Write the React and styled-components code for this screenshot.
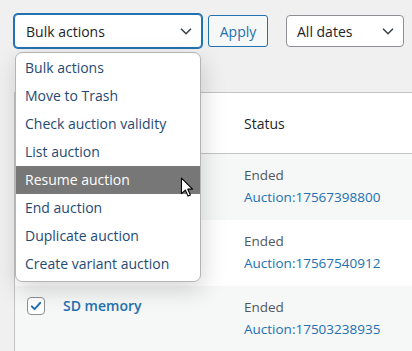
import React from 'react';
import styled, { createGlobalStyle } from 'styled-components';

const GlobalStyle = createGlobalStyle`
    html, body {
        margin: 0;
        padding: 0;
        background: #f0f0f1;
        overflow: hidden;
    }
    body {
        font-family: "Segoe UI", "Open Sans", "Liberation Sans", sans-serif;
        font-size: 14px;
        color: #1d2327;
    }
`;

const actions = [
    'Bulk actions',
    'Move to Trash',
    'Check auction validity',
    'List auction',
    'Resume auction',
    'End auction',
    'Duplicate auction',
    'Create variant auction',
];

const rows = [
    { name: '', auction: '17567398800', striped: true },
    { name: '', auction: '17567540912', striped: false },
    { name: 'SD memory', auction: '17503238935', striped: true, checked: true },
];

function Chevron() {
    return (
        <svg width="18" height="18" viewBox="0 0 20 20">
            <path d="M4.5 7.5l5.5 5.5 5.5-5.5" fill="none" stroke="#3c434a" strokeWidth="1.8" />
        </svg>
    );
}

function Cursor() {
    return (
        <svg width="14" height="21" viewBox="0 0 12 19">
            <path d="M1 1v14l3.5-3.2 2.4 5.5 2.2-1-2.4-5.3H11z" fill="#fff" stroke="#000" strokeWidth="1" strokeLinejoin="round" />
        </svg>
    );
}

function App() {
    return (
        <Page>
            <GlobalStyle />
            <Toolbar>
                <Select width={188} focused>
                    <span>Bulk actions</span>
                    <Chevron />
                </Select>
                <ApplyButton>Apply</ApplyButton>
                <Select width={118} gap={18}>
                    <span>All dates</span>
                    <Chevron />
                </Select>
            </Toolbar>

            <Table>
                <HeadRow>
                    <Cell />
                    <Cell />
                    <HeadCell>Status</HeadCell>
                </HeadRow>
                {rows.map((r) => (
                    <Row key={r.auction} striped={r.striped}>
                        <CheckCell>
                            {r.checked && (
                                <Check>
                                    <svg width="14" height="14" viewBox="0 0 20 20">
                                        <path d="M4 10.5l4 4 8-9" fill="none" stroke="#2271b1" strokeWidth="2.8" strokeLinecap="round" strokeLinejoin="round" />
                                    </svg>
                                </Check>
                            )}
                        </CheckCell>
                        <NameCell>{r.name}</NameCell>
                        <StatusCell>
                            <div>Ended</div>
                            <AuctionLink>Auction:{r.auction}</AuctionLink>
                        </StatusCell>
                    </Row>
                ))}
            </Table>

            <Menu>
                {actions.map((a) => (
                    <MenuItem key={a} active={a === 'Resume auction'}>{a}</MenuItem>
                ))}
            </Menu>
            <CursorWrap>
                <Cursor />
            </CursorWrap>
        </Page>
    );
}

export default App;

const Page = styled.div`
    position: relative;
    width: 412px;
    height: 351px;
    overflow: hidden;
`;

const Toolbar = styled.div`
    display: flex;
    align-items: center;
    padding: 14px 0 0 14px;
    height: 34px;
`;

const Select = styled.div`
    box-sizing: border-box;
    width: ${(p) => p.width}px;
    height: ${(p) => (p.focused ? 34 : 32)}px;
    margin-left: ${(p) => p.gap || 0}px;
    display: flex;
    align-items: center;
    justify-content: space-between;
    padding: 0 6px 0 ${(p) => (p.focused ? 11 : 10)}px;
    background: #fff;
    border: 1px solid ${(p) => (p.focused ? '#2271b1' : '#8c8f94')};
    box-shadow: ${(p) => (p.focused ? '0 0 0 1px #2271b1' : 'none')};
    border-radius: 4px;
    color: #1d2327;
    font-size: 14px;
`;

const ApplyButton = styled.div`
    box-sizing: border-box;
    height: 32px;
    width: 60px;
    margin-left: 6px;
    display: flex;
    align-items: center;
    justify-content: center;
    background: #f6f7f7;
    border: 1px solid #2271b1;
    border-radius: 3px;
    color: #2271b1;
    font-size: 14px;
`;

const Table = styled.div`
    margin: 44px 0 0 14px;
    width: 420px;
    background: #fff;
    border-top: 1px solid #c3c4c7;
    border-left: 1px solid #c3c4c7;
`;

const gridCols = `
    display: grid;
    grid-template-columns: 36px 193px 1fr;
`;

const HeadRow = styled.div`
    ${gridCols}
    height: 60px;
    border-bottom: 1px solid #c3c4c7;
`;

const Cell = styled.div``;

const HeadCell = styled.div`
    display: flex;
    align-items: center;
    color: #1d2327;
    padding-top: 1px;
`;

const Row = styled.div`
    ${gridCols}
    height: 66px;
    background: ${(p) => (p.striped ? '#f6f7f7' : '#fff')};
`;

const CheckCell = styled.div`
    padding: 11px 0 0 12px;
`;

const Check = styled.div`
    box-sizing: border-box;
    width: 18px;
    height: 18px;
    border: 1px solid #8c8f94;
    border-radius: 4px;
    background: #fff;
    display: flex;
    align-items: center;
    justify-content: center;
`;

const NameCell = styled.div`
    padding: 10px 0 0 12px;
    color: #2271b1;
    font-weight: 600;
    font-size: 14px;
`;

const StatusCell = styled.div`
    padding: 10px 0 0 0;
    line-height: 22px;
    color: #50575e;
    font-size: 13.5px;
`;

const AuctionLink = styled.div`
    color: #2271b1;
`;

const Menu = styled.div`
    position: absolute;
    left: 15px;
    top: 52px;
    width: 186px;
    box-sizing: border-box;
    padding: 1px 0 3px;
    background: #fff;
    border: 1px solid #b4b4b4;
    border-radius: 7px;
    box-shadow: 2px 8px 24px rgba(0, 0, 0, 0.16);
    overflow: hidden;
`;

const MenuItem = styled.div`
    height: 28px;
    line-height: 28px;
    padding-left: 9px;
    font-size: 14px;
    color: ${(p) => (p.active ? '#fff' : '#1f4a73')};
    background: ${(p) => (p.active ? '#777' : 'transparent')};
    white-space: nowrap;
`;

const CursorWrap = styled.div`
    position: absolute;
    left: 180px;
    top: 177px;
    line-height: 0;
`;
